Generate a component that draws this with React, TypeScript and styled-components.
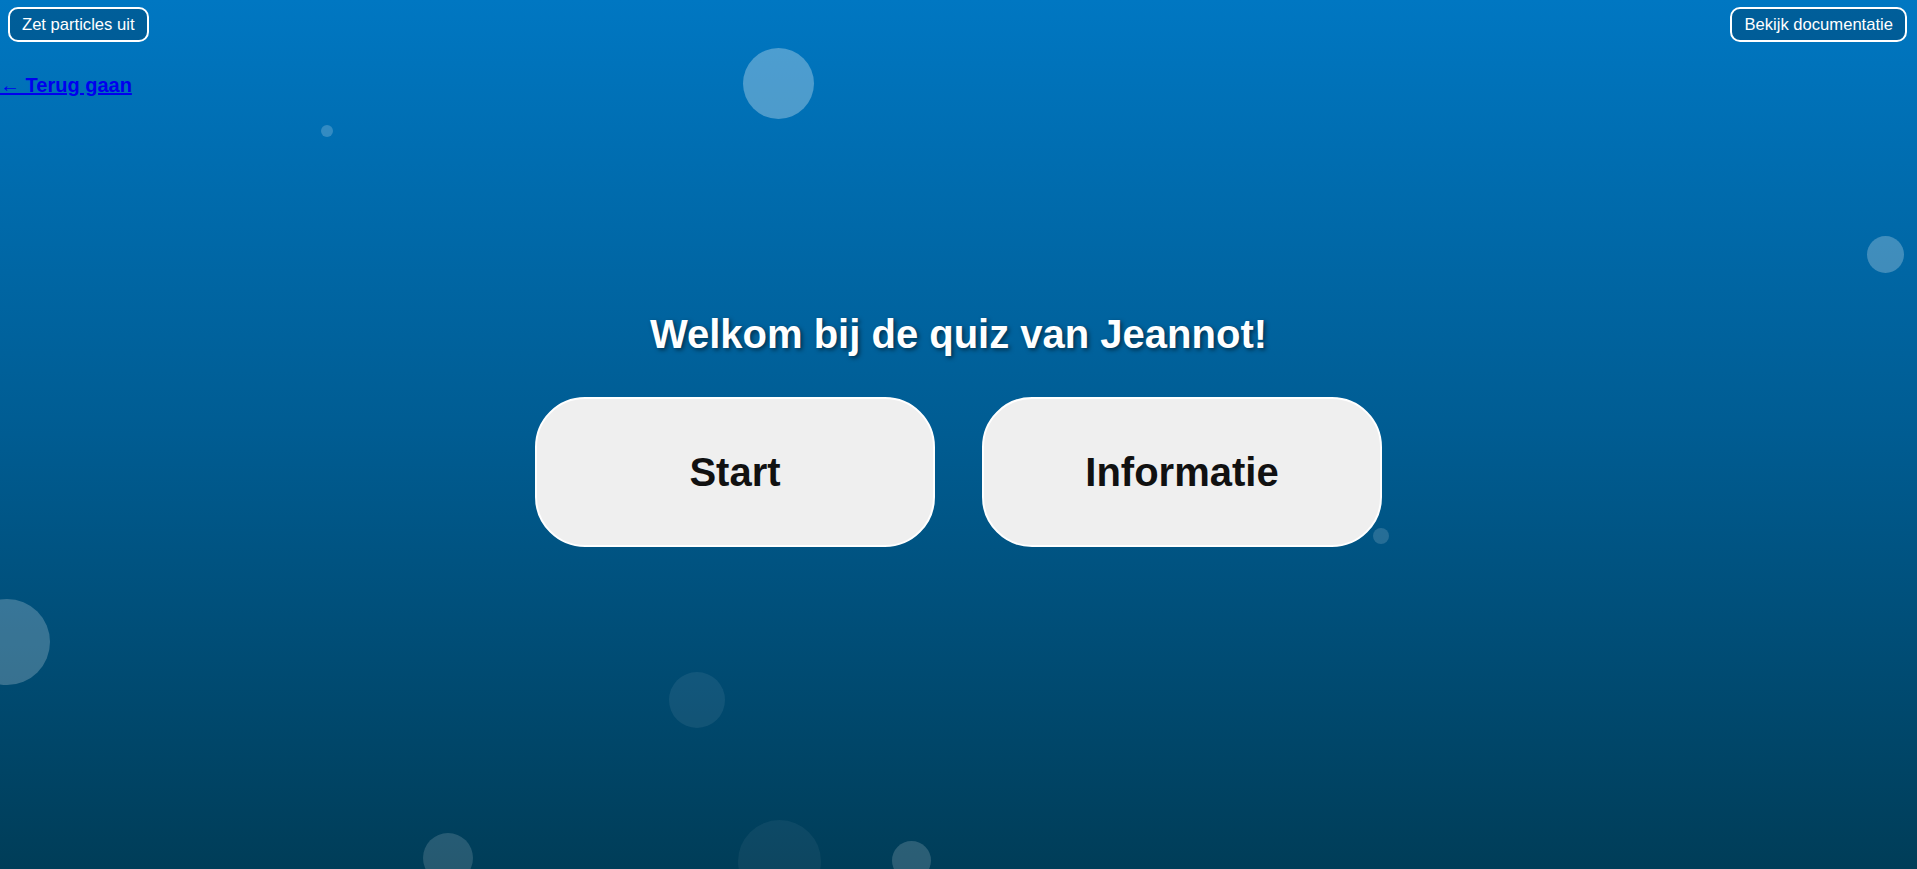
import React from "react";
import styled, { createGlobalStyle } from "styled-components";

const GlobalStyle = createGlobalStyle`
  html, body {
    margin: 0;
    padding: 0;
    height: 100%;
  }
  body {
    font-family: "Liberation Sans", Arial, sans-serif;
    background: #003e5a;
  }
`;

const Page = styled.div`
  position: relative;
  min-height: 100vh;
  overflow: hidden;
  background: linear-gradient(180deg, #0077c2 0%, #005c92 50%, #003d58 100%);
`;

const Canvas = styled.div`
  position: absolute;
  inset: 0;
  pointer-events: none;
`;

const Bubble = styled.span<{ $a: number }>`
  position: absolute;
  border-radius: 50%;
  background: rgba(255, 255, 255, ${(p) => p.$a});
`;

const Content = styled.div`
  position: relative;
  z-index: 1;
`;

const TopBar = styled.header`
  display: flex;
  justify-content: space-between;
  align-items: flex-start;
  padding: 7px 10px 0 8px;
`;

const PillButton = styled.button`
  box-sizing: border-box;
  height: 35px;
  padding: 0 12px;
  border: 2px solid #ffffff;
  border-radius: 10px;
  background: rgba(0, 0, 0, 0.2);
  color: #ffffff;
  font-family: "Liberation Sans", Arial, sans-serif;
  font-size: 16.6px;
  cursor: pointer;
`;

const BackLink = styled.a`
  display: inline-block;
  margin-top: 32px;
  font-family: "Liberation Sans", Arial, sans-serif;
  font-size: 20px;
  line-height: 23px;
  font-weight: bold;
  color: #0000ee;
  text-decoration: underline;
`;

const Main = styled.main`
  display: flex;
  flex-direction: column;
  align-items: center;
  padding-top: 214px;
`;

const Title = styled.h1`
  margin: 0;
  font-family: "Liberation Sans", Arial, sans-serif;
  font-size: 40px;
  line-height: 46px;
  font-weight: bold;
  color: #ffffff;
  text-shadow: 2px 2px 4px rgba(0, 0, 0, 0.5);
`;

const ButtonRow = styled.div`
  display: flex;
  justify-content: center;
  gap: 47px;
  margin-top: 40px;
`;

const BigButton = styled.button`
  box-sizing: border-box;
  width: 400px;
  height: 150px;
  border: 2px solid #ffffff;
  border-radius: 50px;
  background: #efefef;
  color: #111111;
  font-family: "Liberation Sans", Arial, sans-serif;
  font-size: 40px;
  font-weight: bold;
  cursor: pointer;
`;

const bubbles = [
  { x: 778.5, y: 83.5, r: 35.5, a: 0.3 },
  { x: 327, y: 131, r: 6, a: 0.2 },
  { x: 1885, y: 254.5, r: 18.5, a: 0.25 },
  { x: 1381, y: 536, r: 8, a: 0.15 },
  { x: 7, y: 642, r: 43, a: 0.22 },
  { x: 697, y: 700, r: 28, a: 0.07 },
  { x: 779.5, y: 861, r: 41.5, a: 0.05 },
  { x: 911.5, y: 860, r: 19.5, a: 0.17 },
  { x: 447.5, y: 858, r: 25, a: 0.15 },
];

export default function App() {
  return (
    <>
      <GlobalStyle />
      <Page>
        <Canvas>
          {bubbles.map((b, i) => (
            <Bubble
              key={i}
              $a={b.a}
              style={{
                left: b.x - b.r,
                top: b.y - b.r,
                width: b.r * 2,
                height: b.r * 2,
              }}
            />
          ))}
        </Canvas>
        <Content>
          <TopBar>
            <PillButton>Zet particles uit</PillButton>
            <PillButton>Bekijk documentatie</PillButton>
          </TopBar>
          <BackLink href="#">← Terug gaan</BackLink>
          <Main>
            <Title>Welkom bij de quiz van Jeannot!</Title>
            <ButtonRow>
              <BigButton>Start</BigButton>
              <BigButton>Informatie</BigButton>
            </ButtonRow>
          </Main>
        </Content>
      </Page>
    </>
  );
}
